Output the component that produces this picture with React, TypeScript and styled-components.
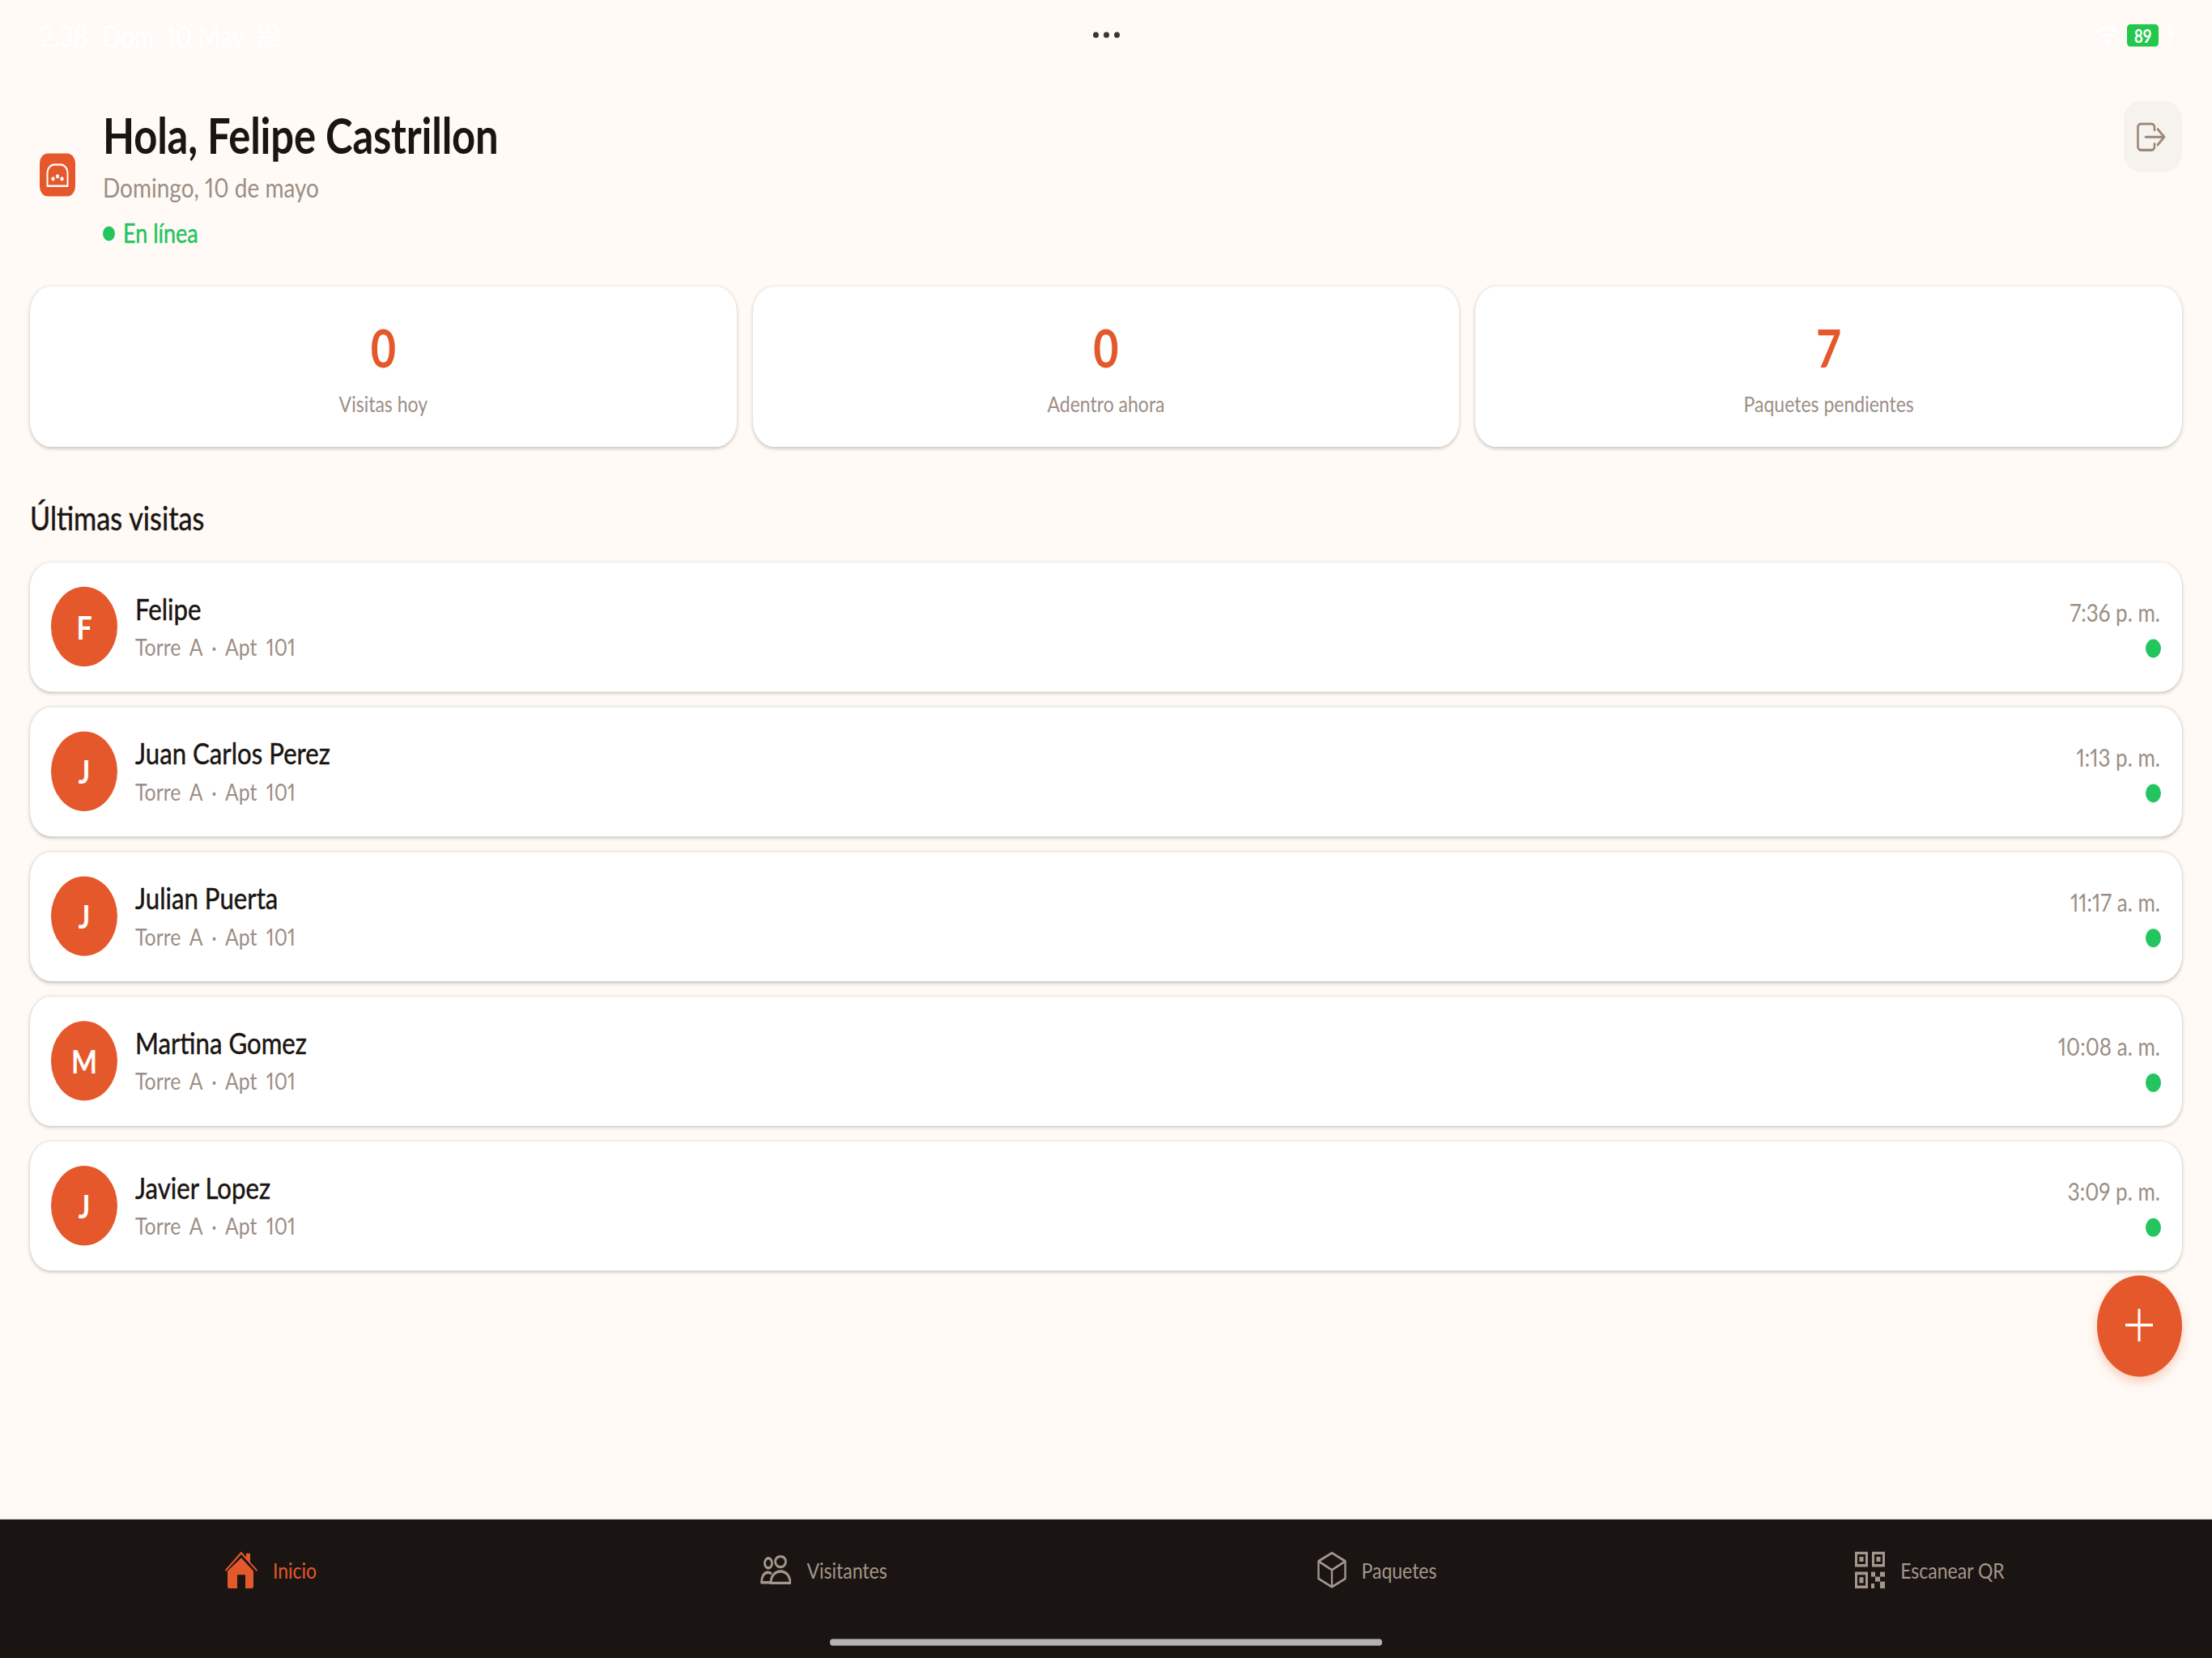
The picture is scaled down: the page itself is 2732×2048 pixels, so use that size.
import React from "react";
import styled, { createGlobalStyle } from "styled-components";

const Global = createGlobalStyle`
  html, body { margin: 0; padding: 0; width: 2732px; height: 2048px; overflow: hidden; background: #fffaf6; }
  * { box-sizing: border-box; }
`;
const orange = "#e5582b", ink = "#1a1512", muted = "#9c8e85", green = "#22c55e";

const Stage = styled.div`
  width: 2732px; height: 1706.67px;
  transform: scaleY(1.2); transform-origin: top left;
  display: flex; flex-direction: column;
  background: #fffaf6; font-family: Lato, "Noto Sans", sans-serif; color: ${ink};
  font-variant-numeric: proportional-nums;
`;
const Main = styled.main`position: relative; flex: 1; display: flex; flex-direction: column; min-height: 0;`;
const StatusBar = styled.div`
  height: 72px; padding: 0 46px; display: grid; grid-template-columns: 1fr auto 1fr; align-items: center;
  color: #ffffff; font-size: 30px;
`;
const StatusLeft = styled.div`display: flex; align-items: center; gap: 18px; padding-left: 3px;`;
const StatusRight = styled.div`display: flex; align-items: center; justify-content: flex-end; gap: 9px;`;
const Dots = styled.div`display: flex; gap: 6px;`;
const Dot3 = styled.span`width: 7px; height: 6px; border-radius: 50%; background: #3a3532;`;
const Battery = styled.span`
  width: 39px; height: 23px; border-radius: 4px; background: #22c74c; color: #fff; font-size: 19px; font-weight: 700;
  display: flex; align-items: center; justify-content: center; line-height: 1;
`;
const Header = styled.header`
  display: flex; align-items: center; padding: 32px 37px 0 49px; gap: 34px;
`;
const Logo = styled.div`
  width: 44px; height: 44px; border-radius: 10px; background: ${orange};
  display: flex; align-items: center; justify-content: center; flex: none;
`;
const HeaderText = styled.div`flex: 1; display: flex; flex-direction: column;`;
const Title = styled.h1`margin: 0; font-size: 50.800px; line-height: 70px; font-weight: 700; letter-spacing: -0.2px;`;
const DateLine = styled.div`font-size: 28px; line-height: 36px; margin-bottom: 2px; color: ${muted};`;
const Online = styled.div`
  margin-top: 13px; margin-bottom: 1px; display: flex; align-items: center; gap: 10px; color: ${green};
  font-size: 27px; line-height: 30px; -webkit-text-stroke: 0.4px ${green};
`;
const OnlineDot = styled.span`width: 15px; height: 15px; border-radius: 50%; background: ${green};`;
const LogoutButton = styled.button`
  align-self: flex-start; width: 72px; height: 73px; border: 0; border-radius: 20px; background: #f6f2ee; padding: 0 4px 0 0;
  display: flex; align-items: center; justify-content: center;
`;
const Stats = styled.section`
  margin: 39px 37px 0; display: grid; grid-template-columns: repeat(3, 1fr); gap: 20px;
`;
const StatCard = styled.div`
  height: 165px; border-radius: 26px; background: #fff; box-shadow: 0 1px 4px rgba(60,50,40,.28);
  display: flex; flex-direction: column; align-items: center; padding-top: 33px;
`;
const StatValue = styled.div`font-size: 54px; line-height: 60px; font-weight: 700; color: ${orange}; font-variant-numeric: tabular-nums;`;
const StatLabel = styled.div`margin-top: 12px; font-size: 23px; line-height: 30px; color: ${muted};`;
const SectionTitle = styled.h2`margin: 53px 37px 26px; font-size: 34.300px; line-height: 40px; font-weight: 400; -webkit-text-stroke: 0.4px ${ink};`;
const List = styled.div`margin: 0 37px; display: flex; flex-direction: column; gap: 16px;`;
const Row = styled.div`
  height: 133px; border-radius: 26px; background: #fff; box-shadow: 0 1px 4px rgba(60,50,40,.32);
  display: flex; align-items: center; padding: 0 26px;
`;
const Avatar = styled.div`
  width: 82px; height: 82px; margin-bottom: 1.500px; border-radius: 50%; background: ${orange}; color: #fff; flex: none;
  display: flex; align-items: center; justify-content: center; font-size: 34px; font-weight: 700;
`;
const RowText = styled.div`margin-left: 22px; flex: 1; display: flex; flex-direction: column; gap: 10px;`;
const Name = styled.div`font-size: 31.200px; line-height: 30px; -webkit-text-stroke: 0.4px ${ink};`;
const Sub = styled.div`font-size: 24.800px; line-height: 30px; color: ${muted}; word-spacing: 5px;`;
const RowMeta = styled.div`display: flex; flex-direction: column; align-items: flex-end; gap: 7.500px; padding-top: 5.500px;`;
const Time = styled.div`font-size: 26px; line-height: 30px; color: ${muted}; margin-right: 1px;`;
const StatusSlot = styled.div`height: 30px; display: flex; align-items: center;`;
const StatusDot = styled.span`width: 19px; height: 19px; border-radius: 50%; background: ${green};`;
const Fab = styled.button`
  position: absolute; right: 37px; bottom: 147px; width: 105px; height: 104px; border: 0; border-radius: 50%;
  background: ${orange}; box-shadow: 0 5px 12px rgba(229,88,43,.28);
  display: flex; align-items: center; justify-content: center; padding: 0 2px 2px 0;
`;
const Nav = styled.nav`
  position: relative; height: 143px; background: #1a1512; display: grid; grid-template-columns: repeat(4, 1fr); flex: none;
`;
const NavItem = styled.div<{ $active?: boolean }>`
  height: 104px; padding-right: 14px; display: flex; align-items: center; justify-content: center; gap: 19px;
  color: ${p => (p.$active ? orange : "#a4968b")}; font-size: 23px;
`;
const HomeBar = styled.div`
  position: absolute; left: 1025px; width: 682px; bottom: 13px; height: 7px; border-radius: 4px; background: #b3b3b1;
`;

const visits = [
  { name: "Felipe", time: "7:36 p. m." },
  { name: "Juan Carlos Perez", time: "1:13 p. m." },
  { name: "Julian Puerta", time: "11:17 a. m." },
  { name: "Martina Gomez", time: "10:08 a. m." },
  { name: "Javier Lopez", time: "3:09 p. m." },
];

const Wifi = () => (
  <svg width="30" height="24" viewBox="0 0 30 24" fill="none" stroke="#fff" strokeWidth="3" strokeLinecap="round">
    <path d="M3 9c7-6 17-6 24 0M8 14c4-3.500 10-3.500 14 0" /><circle cx="15" cy="19" r="2" fill="#fff" />
  </svg>
);
const Bolt = () => (
  <svg width="11" height="24" viewBox="0 0 11 24" fill="#fff"><path d="M7 0 0 14h4l-1 10 8-15H6z" /></svg>
);
const GridIcon = () => (
  <svg width="24" height="24" viewBox="0 0 24 24" fill="none" stroke="#fff" strokeWidth="2">
    <rect x="1" y="1" width="9" height="9" rx="1" /><circle cx="18" cy="6" r="5" />
    <rect x="1" y="14" width="9" height="9" rx="1" /><rect x="14" y="14" width="9" height="9" rx="1" />
  </svg>
);
const LogoIcon = () => (
  <svg width="28" height="25" viewBox="0 0 28 25" fill="none">
    <path d="M1.500 23.500V10a8.500 8.500 0 0 1 8.500-8.500h8a8.500 8.500 0 0 1 8.500 8.500v13.500z" stroke="#fff" strokeWidth="2" strokeLinejoin="round" />
    <circle cx="8.500" cy="16" r="2.200" fill="#fff" /><circle cx="14" cy="13.500" r="2.200" fill="#fff" /><circle cx="19.500" cy="16" r="2.200" fill="#fff" />
  </svg>
);
const LogoutIcon = () => (
  <svg width="36" height="30" viewBox="0 0 36 30" fill="none" stroke="#9c8778" strokeWidth="2.600" strokeLinecap="round" strokeLinejoin="round">
    <path d="M22 8V5a3.500 3.500 0 0 0-3.500-3.500H5A3.500 3.500 0 0 0 1.500 5v20A3.500 3.500 0 0 0 5 28.500h13.500A3.500 3.500 0 0 0 22 25v-3" />
    <path d="M11 15h23M26 7l8 8-8 8" />
  </svg>
);
const Plus = () => (
  <svg width="34" height="34" viewBox="0 0 34 34" stroke="#fff" strokeWidth="3" strokeLinecap="round"><path d="M17 1v32M1 17h32" /></svg>
);
const HomeIcon = () => (
  <svg width="40" height="38" viewBox="0 0 40 38" fill={orange}>
    <path d="M20 0 26 6V2h5v9l9 8-1 1.500L20 3 1 20.500 0 19z" />
    <path d="M20 6.500 35 20v16a2 2 0 0 1-2 2h-8V24H15v14H5a2 2 0 0 1-2-2V20z" />
  </svg>
);
const UsersIcon = () => (
  <svg width="38" height="30" viewBox="0 0 38 30" fill="none" stroke="#a4968b" strokeWidth="2.800" strokeLinejoin="round" strokeLinecap="round">
    <ellipse cx="10" cy="8" rx="4.500" ry="5" /><ellipse cx="25" cy="6.500" rx="6.500" ry="5.500" />
    <path d="M13 28H1.500c0-6 3-10.500 8-10.500 1.500 0 2.500.3 3.500 1" />
    <path d="M13 28.500c0-7 5-12 12-12s12 5 12 12z" />
  </svg>
);
const BoxIcon = () => (
  <svg width="36" height="38" viewBox="0 0 36 38" fill="none" stroke="#a4968b" strokeWidth="2.400" strokeLinejoin="round">
    <path d="M18 1.500 34.500 10v18L18 36.500 1.500 28V10z" /><path d="M1.500 10 18 19l16.500-9M18 19v17.500" />
  </svg>
);
const QrIcon = () => (
  <svg width="37" height="38" viewBox="0 0 37 38" fill="#a4968b">
    <path fillRule="evenodd" d="M0 0h16v16H0zM3 3v10h10V3zM21 0h16v16H21zM24 3v10h10V3zM0 21h16v17H0zM3 24v11h10V24z" />
    <rect x="5.500" y="5.500" width="5" height="5" /><rect x="26.500" y="5.500" width="5" height="5" /><rect x="5.500" y="26.500" width="5" height="6" />
    <rect x="20" y="21" width="5" height="5" /><rect x="31" y="21" width="6" height="5" /><rect x="25" y="26" width="6" height="5" />
    <rect x="20" y="33" width="4" height="5" /><rect x="31" y="31" width="6" height="7" />
  </svg>
);

export default function App() {
  return (
    <>
      <Global />
      <Stage>
        <Main>
          <StatusBar>
            <StatusLeft><span>2:38</span><span>Dom, 10 May</span><GridIcon /></StatusLeft>
            <Dots><Dot3 /><Dot3 /><Dot3 /></Dots>
            <StatusRight><Wifi /><Battery>89</Battery><Bolt /></StatusRight>
          </StatusBar>
          <Header>
            <Logo><LogoIcon /></Logo>
            <HeaderText>
              <Title>Hola, Felipe Castrillon</Title>
              <DateLine>Domingo, 10 de mayo</DateLine>
              <Online><OnlineDot />En línea</Online>
            </HeaderText>
            <LogoutButton aria-label="Salir"><LogoutIcon /></LogoutButton>
          </Header>
          <Stats>
            <StatCard><StatValue>0</StatValue><StatLabel>Visitas hoy</StatLabel></StatCard>
            <StatCard><StatValue>0</StatValue><StatLabel>Adentro ahora</StatLabel></StatCard>
            <StatCard><StatValue>7</StatValue><StatLabel>Paquetes pendientes</StatLabel></StatCard>
          </Stats>
          <SectionTitle>Últimas visitas</SectionTitle>
          <List>
            {visits.map(v => (
              <Row key={v.name}>
                <Avatar>{v.name[0]}</Avatar>
                <RowText><Name>{v.name}</Name><Sub>Torre A · Apt 101</Sub></RowText>
                <RowMeta><Time>{v.time}</Time><StatusSlot><StatusDot /></StatusSlot></RowMeta>
              </Row>
            ))}
          </List>
          <Fab aria-label="Agregar"><Plus /></Fab>
        </Main>
        <Nav>
          <NavItem $active><HomeIcon />Inicio</NavItem>
          <NavItem><UsersIcon />Visitantes</NavItem>
          <NavItem><BoxIcon />Paquetes</NavItem>
          <NavItem><QrIcon />Escanear QR</NavItem>
          <HomeBar />
        </Nav>
      </Stage>
    </>
  );
}
